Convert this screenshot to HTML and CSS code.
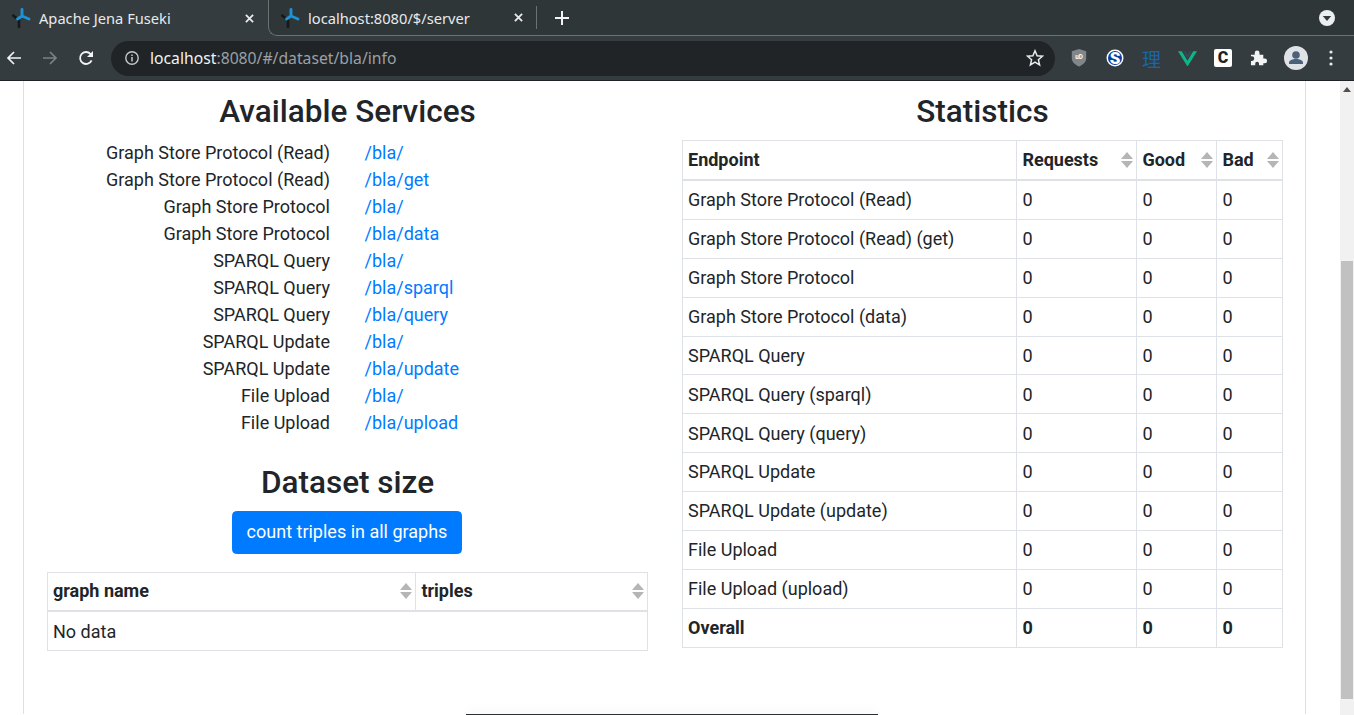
FILE: index.html
```html
<!DOCTYPE html>
<html lang="en">
<head>
<meta charset="utf-8">
<title>Apache Jena Fuseki</title>
<link rel="stylesheet" href="styles.css">
</head>
<body>
<svg class="defs" width="0" height="0" aria-hidden="true">
  <symbol id="jena" viewBox="0 0 20 20">
    <path d="M1 7.500l6 4.500v7" fill="none" stroke="#15191c" stroke-width="2.600" stroke-linecap="round" stroke-linejoin="round"/>
    <path d="M10 1.500V8M10 8l-4.500 3M10 8l7 3" fill="none" stroke="#1d93d6" stroke-width="2.900" stroke-linecap="round"/>
  </symbol>
</svg>
<header class="browser">
  <div class="tabstrip">
    <div class="tab tab-active">
      <svg class="favicon"><use href="#jena"/></svg>
      <span class="tab-title">Apache Jena Fuseki</span>
      <svg class="tab-close" viewBox="0 0 10 10"><path d="M1 1l8 8M9 1l-8 8"/></svg>
    </div>
    <div class="tab tab-inactive">
      <svg class="favicon"><use href="#jena"/></svg>
      <span class="tab-title">localhost:8080/$/server</span>
      <svg class="tab-close" viewBox="0 0 10 10"><path d="M1 1l8 8M9 1l-8 8"/></svg>
    </div>
    <div class="strip-rest">
      <span class="tab-sep"></span>
      <svg class="new-tab" viewBox="0 0 14 14"><path d="M7 0v14M0 7h14"/></svg>
      <span class="strip-fill"></span>
      <svg class="tab-menu" viewBox="0 0 16 16"><circle cx="8" cy="8" r="8" fill="#eceff1"/><path d="M3.800 6h8.400L8 11z" fill="#33393c"/></svg>
    </div>
  </div>
  <div class="toolbar">
    <svg class="nav" viewBox="0 0 16 16"><path d="M15 8H2M8 2L2 8l6 6" fill="none" stroke="#f1f3f4" stroke-width="1.700"/></svg>
    <svg class="nav" viewBox="0 0 16 16"><path d="M1 8h13M8 2l6 6-6 6" fill="none" stroke="#7c8184" stroke-width="1.700"/></svg>
    <svg class="nav" viewBox="0 0 16 16"><path d="M13.600 10.400A6 6 0 1 1 12.400 3.800L14.400 6" fill="none" stroke="#f1f3f4" stroke-width="1.800"/><path d="M15 1v6H9z" fill="#f1f3f4"/></svg>
    <div class="omnibox">
      <svg class="info" viewBox="0 0 16 16"><circle cx="8" cy="8" r="6.200" fill="none" stroke="#c4c7c9" stroke-width="1.400"/><path d="M8 7v4.400M8 4.400v1.500" stroke="#c4c7c9" stroke-width="1.500"/></svg>
      <span class="url"><span class="host">localhost</span>:8080/#/dataset/bla/info</span>
      <svg class="star" viewBox="0 0 18 18"><path d="M9 1.800l2.100 4.900 5.300.5-4 3.500 1.200 5.200L9 13.200l-4.600 2.700 1.200-5.200-4-3.500 5.300-.5z" fill="none" stroke="#e8eaed" stroke-width="1.500"/></svg>
    </div>
    <div class="extensions">
      <svg class="ext" viewBox="0 0 18 20"><path d="M9 0l8 2.500v8c0 4-4 7-8 9-4-2-8-5-8-9v-8z" fill="#80868a"/><text x="9" y="11.500" class="ext-ub">uD</text></svg>
      <svg class="ext" viewBox="0 0 18 18"><circle cx="9" cy="9" r="8.500" fill="#fff"/><circle cx="9" cy="9" r="7" fill="#0b3e9e"/><text x="9" y="14.800" class="ext-s">S</text></svg>
      <span class="ext-li">理</span>
      <svg class="ext ext-vue" viewBox="0 0 20 16"><path d="M0 1h4l6 10 6-10h4L10 17z" fill="#10b585"/><path d="M5.500 1H8l2 3.600L12 1h2.500L10 8.500z" fill="#34495e"/></svg>
      <span class="ext-c">C</span>
      <svg class="ext" viewBox="0 0 18 18"><path d="M1 6h4V4a2.500 2.500 0 0 1 5 0v2h4v4h1.500a2.500 2.500 0 0 1 0 5H14v2H9.500v-1.500a2 2 0 0 0-4 0V17H1v-4.500h1a2.500 2.500 0 0 0 0-5H1z" fill="#f1f3f4" transform="scale(.95)"/></svg>
      <svg class="avatar" viewBox="0 0 24 24"><circle cx="12" cy="12" r="12" fill="#dfe3e8"/><circle cx="12" cy="9" r="3.800" fill="#4d6079"/><path d="M5 18v-1.500c0-2 3.500-3.500 7-3.500s7 1.500 7 3.500V18z" fill="#4d6079"/></svg>
      <svg class="kebab" viewBox="0 0 4 16"><circle cx="2" cy="2" r="1.600"/><circle cx="2" cy="8" r="1.600"/><circle cx="2" cy="14" r="1.600"/></svg>
    </div>
  </div>
</header>
<div class="viewport">
  <main class="page">
    <div class="card">
      <section class="col">
        <h2 class="svc-title">Available Services</h2>
        <dl class="services">
          <div class="svc"><dt>Graph Store Protocol (Read)</dt><dd><a href="#">/bla/</a></dd></div>
          <div class="svc"><dt>Graph Store Protocol (Read)</dt><dd><a href="#">/bla/get</a></dd></div>
          <div class="svc"><dt>Graph Store Protocol</dt><dd><a href="#">/bla/</a></dd></div>
          <div class="svc"><dt>Graph Store Protocol</dt><dd><a href="#">/bla/data</a></dd></div>
          <div class="svc"><dt>SPARQL Query</dt><dd><a href="#">/bla/</a></dd></div>
          <div class="svc"><dt>SPARQL Query</dt><dd><a href="#">/bla/sparql</a></dd></div>
          <div class="svc"><dt>SPARQL Query</dt><dd><a href="#">/bla/query</a></dd></div>
          <div class="svc"><dt>SPARQL Update</dt><dd><a href="#">/bla/</a></dd></div>
          <div class="svc"><dt>SPARQL Update</dt><dd><a href="#">/bla/update</a></dd></div>
          <div class="svc"><dt>File Upload</dt><dd><a href="#">/bla/</a></dd></div>
          <div class="svc"><dt>File Upload</dt><dd><a href="#">/bla/upload</a></dd></div>
        </dl>
        <h2 class="size-title">Dataset size</h2>
        <div class="btn-row"><button class="btn" type="button">count triples in all graphs</button></div>
        <table class="grid graphs">
          <thead>
            <tr>
              <th class="g-name"><div class="th-in">graph name<span class="sort"></span></div></th>
              <th><div class="th-in">triples<span class="sort"></span></div></th>
            </tr>
          </thead>
          <tbody><tr><td colspan="2">No data</td></tr></tbody>
        </table>
      </section>
      <section class="col">
        <h2 class="stats-title">Statistics</h2>
        <table class="grid stats">
          <thead>
            <tr>
              <th class="s-end"><div class="th-in">Endpoint</div></th>
              <th class="s-req"><div class="th-in">Requests<span class="sort"></span></div></th>
              <th class="s-good"><div class="th-in">Good<span class="sort"></span></div></th>
              <th><div class="th-in">Bad<span class="sort"></span></div></th>
            </tr>
          </thead>
          <tbody>
            <tr><td>Graph Store Protocol (Read)</td><td>0</td><td>0</td><td>0</td></tr>
            <tr><td>Graph Store Protocol (Read) (get)</td><td>0</td><td>0</td><td>0</td></tr>
            <tr><td>Graph Store Protocol</td><td>0</td><td>0</td><td>0</td></tr>
            <tr><td>Graph Store Protocol (data)</td><td>0</td><td>0</td><td>0</td></tr>
            <tr><td>SPARQL Query</td><td>0</td><td>0</td><td>0</td></tr>
            <tr><td>SPARQL Query (sparql)</td><td>0</td><td>0</td><td>0</td></tr>
            <tr><td>SPARQL Query (query)</td><td>0</td><td>0</td><td>0</td></tr>
            <tr><td>SPARQL Update</td><td>0</td><td>0</td><td>0</td></tr>
            <tr><td>SPARQL Update (update)</td><td>0</td><td>0</td><td>0</td></tr>
            <tr><td>File Upload</td><td>0</td><td>0</td><td>0</td></tr>
            <tr><td>File Upload (upload)</td><td>0</td><td>0</td><td>0</td></tr>
            <tr class="total"><td>Overall</td><td>0</td><td>0</td><td>0</td></tr>
          </tbody>
        </table>
      </section>
    </div>
    <div class="footer-edge"></div>
  </main>
  <div class="scrollbar">
    <svg class="sb-up" viewBox="0 0 8 5"><path d="M0 5l4-5 4 5z"/></svg>
    <div class="sb-thumb"></div>
  </div>
</div>
</body>
</html>
```

FILE: styles.css
```css
* { box-sizing: border-box; }
html, body { margin: 0; height: 100%; overflow: hidden; }
body {
  width: 1354px;
  height: 715px;
  display: flex;
  flex-direction: column;
  font-family: "Roboto", "Liberation Sans", sans-serif;
  font-size: 18px;
  line-height: 27px;
  color: #212529;
  background: #fff;
}
.defs { position: absolute; }

/* Browser frame */
.browser { flex: none; height: 81px; display: flex; flex-direction: column; background: #353c3f; border-bottom: 1px solid #1e2224; }
.tabstrip { flex: none; height: 36px; display: flex; background: #353c3f; font-family: "Noto Sans", sans-serif; font-size: 14.67px; line-height: 20px; }
.tab { height: 36px; display: flex; align-items: center; color: #e8eaed; flex: none; }
.tab-active { width: 268px; padding: 0 14px 0 12px; background: #353c3f; }
.tab-inactive { width: 268px; padding: 0 13px 0 12px; background: #2f3638; border-left: 1px solid #6c7174; border-bottom: 1px solid #6c7174; border-bottom-left-radius: 9px; }
.favicon { width: 20px; height: 20px; flex: none; margin-right: 7px; }
.tab-title { flex: 1; white-space: nowrap; }
.tab-close { width: 9px; height: 9px; flex: none; stroke: #e8eaed; stroke-width: 2; }
.strip-rest { flex: 1; display: flex; align-items: center; background: #2f3638; border-bottom: 1px solid #6c7174; }
.tab-sep { width: 1px; height: 23px; background: #6c7174; flex: none; }
.new-tab { width: 14px; height: 14px; margin-left: 18px; stroke: #f1f3f4; stroke-width: 2; flex: none; }
.strip-fill { flex: 1; }
.tab-menu { width: 16px; height: 16px; margin-right: 19px; flex: none; }

.toolbar { flex: 1; display: flex; align-items: center; padding-left: 6px; }
.nav { width: 16px; height: 16px; flex: none; margin-right: 20px; }
.nav:nth-child(3) { margin-right: 17px; }
.omnibox { width: 944px; height: 35px; border-radius: 18px; background: #202427; display: flex; align-items: center; padding: 0 11px 0 13px; flex: none; }
.info { width: 16px; height: 16px; flex: none; margin-right: 10px; }
.url { flex: 1; font-family: "Noto Sans", sans-serif; font-size: 15.73px; color: #9aa0a4; white-space: nowrap; }
.host { color: #f1f3f4; }
.star { width: 18px; height: 18px; flex: none; }
.extensions { flex: 1; display: flex; align-items: center; padding-left: 15px; }
.ext { width: 18px; height: 18px; flex: none; margin-right: 18px; }
.ext-ub { font: 700 7px "Roboto", sans-serif; fill: #fff; text-anchor: middle; }
.ext-s { font: 900 17px "Roboto", sans-serif; fill: #fff; text-anchor: middle; }
.ext-li { width: 18px; margin-right: 18px; font: 19px/19px "Noto Sans CJK JP", sans-serif; color: #1767a8; flex: none; }
.ext-vue { width: 19px; height: 16px; margin-right: 17px; }
.ext-c { width: 18px; height: 18px; margin-right: 18px; border-radius: 2px; background: #fff; color: #222; font: 900 16px/18px "Roboto", sans-serif; text-align: center; flex: none; }
.avatar { width: 24px; height: 24px; flex: none; margin-right: 21px; margin-left: -2px; }
.kebab { width: 4px; height: 16px; fill: #e8eaed; flex: none; }

/* Page */
.viewport { flex: 1; min-height: 0; display: flex; }
.page { flex: 1; min-width: 0; display: flex; flex-direction: column; overflow: hidden; }
.card { flex: 1; min-height: 0; margin: 0 34px 0 23px; border-left: 1px solid #dfdfdf; border-right: 1px solid #dfdfdf; padding: 12px 23px 0; display: flex; gap: 34px; }
.col { width: 601px; flex: none; }
h2 { margin: 0; font-size: 31.5px; line-height: 37.8px; font-weight: 500; text-align: center; }
.svc-title { margin-bottom: 8.5px; }
.stats-title { margin-bottom: 9.5px; }
.services { margin: 0; }
.svc { display: flex; height: 27px; }
dt { width: 283px; text-align: right; font-weight: 400; }
dd { margin: 0 0 0 34.5px; }
a { color: #007bff; text-decoration: none; }
.size-title { margin-top: 28px; margin-bottom: 9px; }
.btn-row { display: flex; justify-content: center; padding-right: 1px; margin-bottom: 18px; }
.btn { padding: 6.25px 13.5px 7.25px; border: 1px solid #007bff; border-radius: 4.5px; background: #007bff; color: #fff; font: inherit; }

.grid { width: 601px; table-layout: fixed; border-collapse: collapse; border: 1px solid #dee2e6; }
.grid th, .grid td { border: 1px solid #dee2e6; text-align: left; vertical-align: middle; }
.grid td { padding: 5.2px 5.4px 5.7px; }
.grid td:first-child { padding-left: 5px; }
.grid thead th { border-bottom: 2px solid #dee2e6; font-weight: 700; padding: 4.9px 3px 5.9px 5.4px; }
.grid thead th:first-child { padding-left: 5px; }
.th-in { display: flex; align-items: center; justify-content: space-between; }
.sort { display: flex; flex-direction: column; gap: 2px; flex: none; width: 12px; }
.sort::before, .sort::after { content: ""; border-left: 6px solid transparent; border-right: 6px solid transparent; }
.sort::before { border-bottom: 7px solid #b5b5b5; }
.sort::after { border-top: 7px solid #b5b5b5; }
.g-name { width: 368px; }
.s-end { width: 334px; }
.s-req { width: 120px; }
.s-good { width: 80px; }
.total td { font-weight: 700; }
.footer-edge { flex: none; width: 412px; height: 1px; margin-left: 466px; background: #2c2f31; box-shadow: 0 -3px 10px rgba(0,0,0,.14); }

.scrollbar { flex: none; width: 14px; background: #f1f1f1; display: flex; flex-direction: column; align-items: center; }
.sb-up { width: 8px; height: 5px; margin-top: 6px; fill: #505050; flex: none; }
.sb-thumb { width: 12px; height: 438px; margin-top: 169px; background: #c1c1c1; flex: none; }
```
